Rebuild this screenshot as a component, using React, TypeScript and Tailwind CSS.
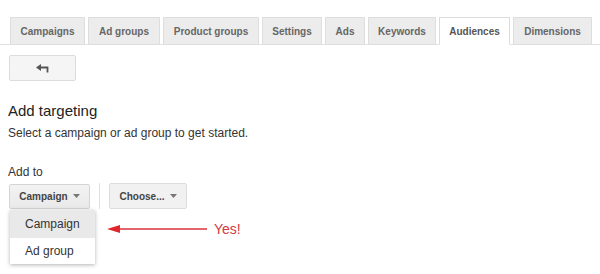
import React from "react";

const tabs = [
  { label: "Campaigns", w: "w-[75px]" },
  { label: "Ad groups", w: "w-[72px]" },
  { label: "Product groups", w: "w-[96px]" },
  { label: "Settings", w: "w-[60px]" },
  { label: "Ads", w: "w-[40px]" },
  { label: "Keywords", w: "w-[68px]" },
  { label: "Audiences", w: "w-[71px]", active: true },
  { label: "Dimensions", w: "w-[79px]" },
];

function Caret() {
  return (
    <svg width="7" height="4" viewBox="0 0 7 4" className="ml-[5px]">
      <path d="M0 0 H7 L3.5 4 Z" fill="#777" />
    </svg>
  );
}

export default function App() {
  return (
    <div className="w-[600px] h-[274px] bg-white overflow-hidden font-['Liberation_Sans',Arial,sans-serif]">
      {/* tab strip */}
      <div className="pt-[17px] flex gap-[3px] pl-[10px] border-b border-[#e2e2e2]">
        {tabs.map((t) => (
          <div
            key={t.label}
            className={`${t.w} h-[28px] -mb-px flex items-center justify-center text-[10px] font-bold border ${
              t.active
                ? "bg-white border-[#dcdcdc] border-b-white text-[#555]"
                : "bg-[#ececec] border-[#dedede] text-[#666]"
            }`}
          >
            {t.label}
          </div>
        ))}
      </div>

      <div className="pl-[8px]">
        <button className="mt-[10px] ml-[1px] w-[67px] h-[26px] flex items-center justify-center bg-[#f5f5f5] border border-[#dcdcdc] rounded-[2px]">
          <svg width="13" height="9" viewBox="0 0 13 9">
            <path d="M0 3.5 L5 0 V7 Z" fill="#555" />
            <path d="M4.5 3.5 H11.5 V8.5" stroke="#555" strokeWidth="1.8" fill="none" />
          </svg>
        </button>

        <h2 className="mt-[20px] text-[15px] leading-[20px] text-[#222]">Add targeting</h2>
        <p className="mt-[4px] text-[12px] leading-[16px] text-[#333]">
          Select a campaign or ad group to get started.
        </p>

        <p className="mt-[23px] text-[12px] leading-[16px] text-[#333]">Add to</p>

        <div className="mt-[3px] flex items-center">
          <div className="relative">
            <button className="ml-[1px] w-[81px] h-[25px] flex items-center justify-center text-[10px] font-bold text-[#444] bg-gradient-to-b from-[#f3f3f3] to-[#e9e9e9] border border-[#d4d4d4] rounded-[2px]">
              Campaign
              <Caret />
            </button>
            <div className="absolute left-[2px] top-[26px] w-[85px] bg-white shadow-[0_1px_4px_rgba(0,0,0,0.3)] z-10">
              <div className="h-[28px] flex items-center pl-[15px] bg-[#e9e9e9] text-[12px] text-[#333]">
                Campaign
              </div>
              <div className="h-[26px] flex items-center pl-[15px] text-[12px] text-[#333]">
                Ad group
              </div>
            </div>
            {/* annotation */}
            <div className="absolute left-[99px] top-[35px] flex items-center">
              <svg width="101" height="10" viewBox="0 0 101 10">
                <path d="M0 5 L13 1 V9 Z" fill="#e0262b" />
                <path d="M12 5 H100" stroke="#d9333a" strokeWidth="1.4" />
              </svg>
              <span className="ml-[6px] text-[14px] text-[#d33a3f]">Yes!</span>
            </div>
          </div>
          <div className="ml-[9px] w-px h-[26px] bg-[#e0e0e0]" />
          <button className="ml-[9px] w-[78px] h-[26px] flex items-center justify-center text-[10px] font-bold text-[#444] bg-[#f1f1f1] border border-[#dcdcdc] rounded-[2px]">
            Choose...
            <Caret />
          </button>
        </div>
      </div>
    </div>
  );
}
